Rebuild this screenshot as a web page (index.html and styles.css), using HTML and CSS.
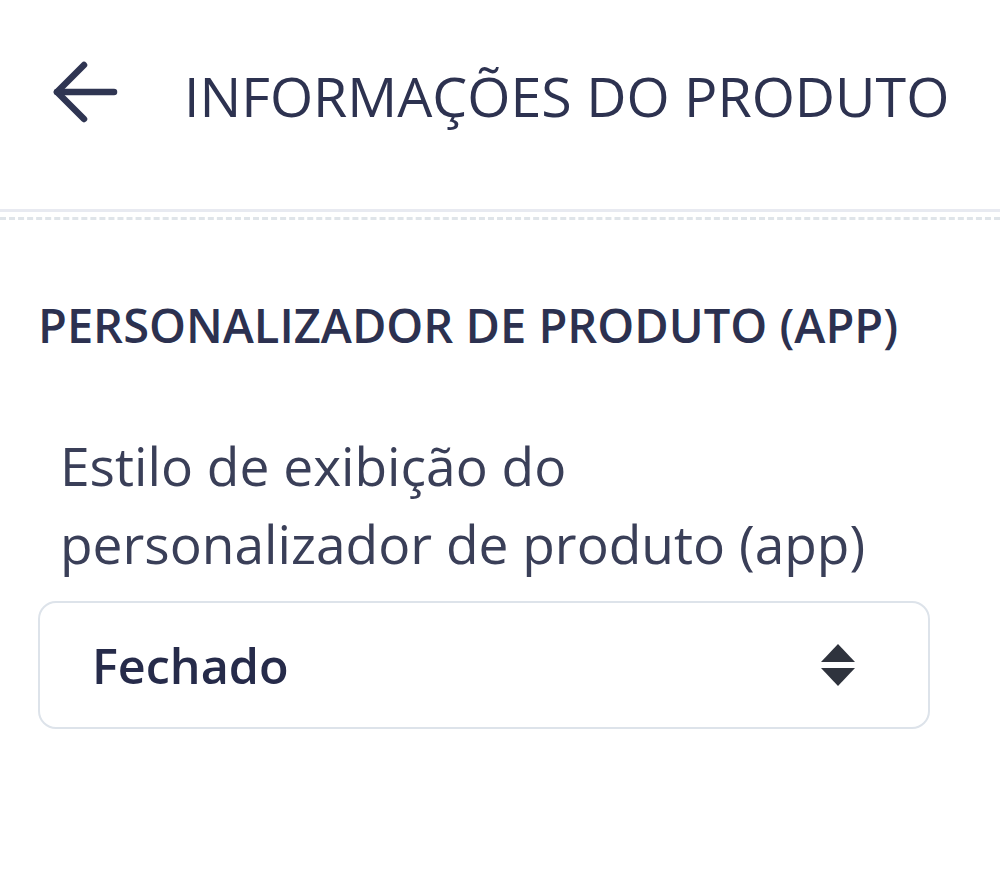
FILE: index.html
```html
<!DOCTYPE html>
<html lang="pt-BR">
<head>
    <meta charset="UTF-8">
    <meta name="viewport" content="width=device-width, initial-scale=1.0">
    <title>Informações do produto</title>
    <link rel="stylesheet" href="styles.css">
</head>
<body>
    <div class="header">
        <span class="back-icon">
            <svg width="66" height="62" viewBox="0 0 66 62" fill="none" stroke="#2f3552" stroke-width="6.5" stroke-linecap="round" stroke-linejoin="round">
                <path d="M62 31H5"/>
                <path d="M32 4L5 31l27 27"/>
            </svg>
        </span>
        <span class="title">INFORMAÇÕES DO PRODUTO</span>
    </div>
    <div class="divider"></div>

    <div class="section">
        <div class="section-title">PERSONALIZADOR DE PRODUTO (APP)</div>
        <label class="field-label">Estilo de exibição do<br>personalizador de produto (app)</label>
        <div class="select-box">
            <span class="select-value">Fechado</span>
            <svg class="select-arrows" width="36" height="44" viewBox="0 0 36 44" fill="#2f333d">
                <path d="M18 1L35 19H1z"/>
                <path d="M1 25h34L18 43z"/>
            </svg>
        </div>
    </div>
</body>
</html>
```

FILE: styles.css
```css
body {
    margin: 0;
    padding: 0;
    background: #ffffff;
    font-family: "Open Sans", "Noto Sans", Arial, sans-serif;
    color: #2d3250;
}

.header {
    height: 212px;
    display: flex;
    align-items: center;
    padding: 0 0 0 52px;
    box-sizing: border-box;
    border-bottom: 3px solid #e8eaf1;
}

.back-icon {
    display: flex;
    margin-right: 66px;
    margin-top: -26px;
}

.title {
    font-size: 55.5px;
    margin-top: -18px;
    white-space: nowrap;
}

.divider {
    margin-top: 5px;
    border-top: 3px dashed #dfe4e9;
}

.section {
    padding: 75px 70px 0 38px;
}

.section-title {
    font-size: 47px;
    font-weight: 600;
    line-height: 60px;
    color: #2c3150;
}

.field-label {
    display: block;
    margin: 72px 0 18px 22px;
    font-size: 53.3px;
    line-height: 78px;
    color: #3a3f58;
}

.select-box {
    width: 892px;
    height: 128px;
    box-sizing: border-box;
    border: 2px solid #dde3ea;
    border-radius: 18px;
    display: flex;
    align-items: center;
    justify-content: space-between;
    padding: 0 72px 0 52px;
}

.select-value {
    font-size: 48.5px;
    font-weight: 600;
    color: #262b4a;
}
```
